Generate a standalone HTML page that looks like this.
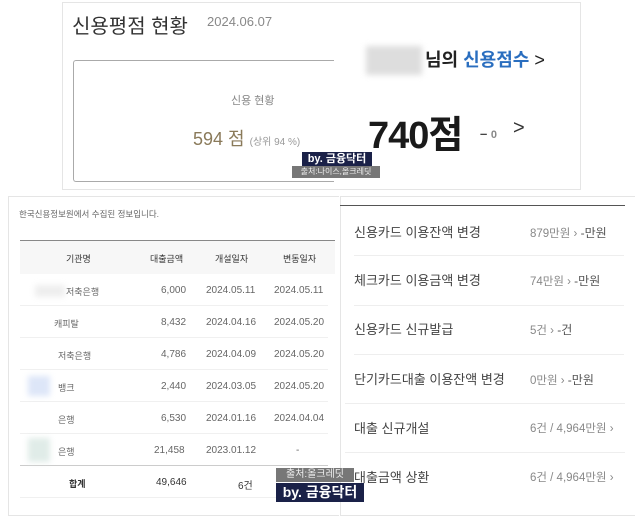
<!DOCTYPE html>
<html><head><meta charset="utf-8"><style>
body{margin:0;width:635px;height:515px;background:#fff;position:relative;overflow:hidden;font-family:"Liberation Sans","Noto Sans CJK KR",sans-serif;color:#333}
.a{position:absolute;white-space:nowrap}
.row{position:absolute;left:20px;width:308px;height:31px;border-bottom:1px solid #f0f0f0;font-size:10px;color:#666}
.row span{position:absolute;top:11px}
.r{position:absolute;left:354px;font-size:13px;color:#444}
.v{position:absolute;left:530px;font-size:11.5px;color:#888}
.v b{font-weight:normal;color:#555;font-size:12px}
</style></head><body>
<div class="a" style="left:62px;top:2px;width:517px;height:186px;border:1px solid #e5e5e5"></div>
<div class="a" style="left:72px;top:10px;font-size:20px;color:#333">신용평점 현황</div>
<div class="a" style="left:207px;top:14px;font-size:13px;color:#888">2024.06.07</div>
<div class="a" style="left:73px;top:60px;width:260px;height:120px;border:1px solid #aaa;border-right:none;border-radius:3px 0 0 3px"></div>
<div class="a" style="left:231px;top:92px;font-size:11px;color:#888">신용 현황</div>
<div class="a" style="left:193px;top:125px;font-size:18px;color:#8a7a5a">594 점 <span style="font-size:10px;color:#999">(상위 94 %)</span></div>
<div class="a" style="left:366px;top:46px;width:56px;height:29px;background:#ddd;filter:blur(3px)"></div>
<div class="a" style="left:425px;top:46px;font-size:18px;font-weight:bold;color:#222">님의 <span style="color:#2a6ebf">신용점수</span> <span style="font-weight:normal">&gt;</span></div>
<div class="a" style="left:368px;top:104px;font-size:38px;font-weight:bold;color:#1a1a1a;letter-spacing:-1px">740점</div>
<div class="a" style="left:480px;top:126px;font-size:13px;font-weight:bold;color:#444">– <span style="font-size:11px;color:#888">0</span></div>
<div class="a" style="left:513px;top:117px;font-size:20px;color:#333">&gt;</div>
<div class="a" style="left:302px;top:152px;width:70px;height:14px;background:#1a2148;color:#fff;font-size:11px;font-weight:bold;text-align:center;line-height:14px">by. 금융닥터</div>
<div class="a" style="left:292px;top:166px;width:88px;height:12px;background:#777;color:#eee;font-size:8px;text-align:center;line-height:12px">출처:나이스,올크레딧</div>

<div class="a" style="left:8px;top:196px;width:330px;height:318px;border:1px solid #e5e5e5;border-right:none"></div>
<div class="a" style="left:19px;top:208px;font-size:8.5px;color:#666">한국신용정보원에서 수집된 정보입니다.</div>
<div class="a" style="left:20px;top:240px;width:315px;height:33px;background:#f7f7f7;border-top:1px solid #888"></div>
<div class="a" style="left:66px;top:252px;font-size:9px;color:#333">기관명</div>
<div class="a" style="left:150px;top:252px;font-size:9px;color:#333">대출금액</div>
<div class="a" style="left:215px;top:252px;font-size:9px;color:#333">개설일자</div>
<div class="a" style="left:283px;top:252px;font-size:9px;color:#333">변동일자</div>
<div class="row" style="top:274px"><span style="left:15px;width:30px;height:12px;background:#eee;filter:blur(3px)"></span><span style="left:46px;font-size:9px">저축은행</span><span style="left:141px">6,000</span><span style="left:186px">2024.05.11</span><span style="left:254px">2024.05.11</span></div>
<div class="row" style="top:306px"><span style="left:34px;font-size:9px">캐피탈</span><span style="left:141px">8,432</span><span style="left:186px">2024.04.16</span><span style="left:254px">2024.05.20</span></div>
<div class="row" style="top:338px"><span style="left:38px;font-size:9px">저축은행</span><span style="left:141px">4,786</span><span style="left:186px">2024.04.09</span><span style="left:254px">2024.05.20</span></div>
<div class="row" style="top:370px"><span style="left:8px;top:6px;width:22px;height:20px;background:#dde6f8;filter:blur(3px)"></span><span style="left:38px;font-size:9px">뱅크</span><span style="left:141px">2,440</span><span style="left:186px">2024.03.05</span><span style="left:254px">2024.05.20</span></div>
<div class="row" style="top:402px"><span style="left:38px;font-size:9px">은행</span><span style="left:141px">6,530</span><span style="left:186px">2024.01.16</span><span style="left:254px">2024.04.04</span></div>
<div class="row" style="top:434px;border-bottom:1px solid #ccc"><span style="left:8px;top:4px;width:22px;height:24px;background:#e0ece8;filter:blur(3px)"></span><span style="left:38px;font-size:9px">은행</span><span style="left:134px">21,458</span><span style="left:186px">2023.01.12</span><span style="left:276px">-</span></div>
<div class="row" style="top:466px;color:#333"><span style="left:49px;font-size:9px;font-weight:bold">합계</span><span style="left:136px">49,646</span><span style="left:218px">6건</span></div>

<div class="a" style="left:340px;top:196px;width:295px;height:318px;border:1px solid #e5e5e5;border-right:none"></div>
<div class="a" style="left:340px;top:205px;width:285px;height:1px;background:#555"></div>
<div class="r" style="top:222px">신용카드 이용잔액 변경</div><div class="v" style="top:224px">879만원 › <b>-만원</b></div>
<div class="a" style="left:354px;top:255px;width:270px;height:1px;background:#eee"></div>
<div class="r" style="top:270px">체크카드 이용금액 변경</div><div class="v" style="top:272px">74만원 › <b>-만원</b></div>
<div class="a" style="left:354px;top:305px;width:270px;height:1px;background:#eee"></div>
<div class="r" style="top:319px">신용카드 신규발급</div><div class="v" style="top:321px">5건 › <b>-건</b></div>
<div class="a" style="left:354px;top:354px;width:270px;height:1px;background:#eee"></div>
<div class="r" style="top:369px">단기카드대출 이용잔액 변경</div><div class="v" style="top:371px">0만원 › <b>-만원</b></div>
<div class="a" style="left:345px;top:403px;width:280px;height:1px;background:#eee"></div>
<div class="r" style="top:418px">대출 신규개설</div><div class="v" style="top:420px">6건 / 4,964만원 ›</div>
<div class="a" style="left:345px;top:452px;width:280px;height:1px;background:#eee"></div>
<div class="r" style="top:467px">대출금액 상환</div><div class="v" style="top:469px">6건 / 4,964만원 ›</div>

<div class="a" style="left:276px;top:468px;width:78px;height:14px;background:#777;color:#eee;font-size:10px;text-align:center;line-height:14px">출처:올크레딧</div>
<div class="a" style="left:276px;top:483px;width:88px;height:19px;background:#1a2148;color:#fff;font-size:14px;font-weight:bold;text-align:center;line-height:19px">by. 금융닥터</div>
</body></html>
